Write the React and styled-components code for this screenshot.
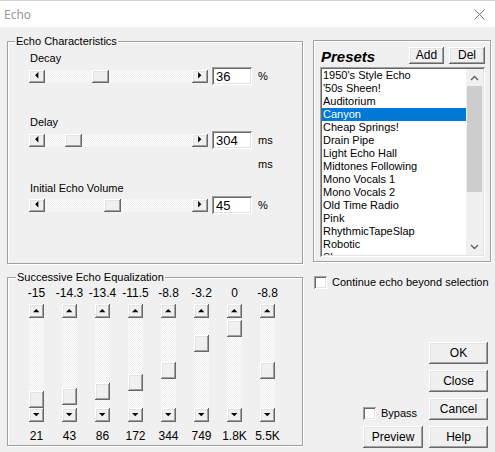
import React from 'react';
import styled, { createGlobalStyle, css } from 'styled-components';

const Global = createGlobalStyle`
  html, body { margin: 0; padding: 0; background: #f0f0f0; }
  body { font-family: "Liberation Sans", Arial, sans-serif; font-size: 11px; color: #000; }
  * { box-sizing: border-box; }
`;

const raised = css`
  background: #f0f0f0;
  box-shadow: inset -1px -1px #696969, inset 1px 1px #fff, inset -2px -2px #a0a0a0, inset 2px 2px #e3e3e3;
`;
const sunken = css`
  background: #fff;
  box-shadow: inset 1px 1px #a0a0a0, inset -1px -1px #fff, inset 2px 2px #696969, inset -2px -2px #e3e3e3;
`;
const dither = css`
  background: repeating-conic-gradient(#fff 0 25%, #ececec 0 50%) 0 0 / 2px 2px;
`;

const Window = styled.div`
  width: 495px;
  height: 452px;
  display: flex;
  flex-direction: column;
  overflow: hidden;
  background: #f0f0f0;
`;

const TitleBar = styled.div`
  height: 27px;
  flex: none;
  background: #fff;
  border-top: 1px solid #d4d4d4;
  display: flex;
  align-items: center;
  justify-content: space-between;
  padding: 0 10px 0 4px;
`;

const Title = styled.span`
  font-family: "Noto Sans", "Open Sans", sans-serif;
  font-size: 12px;
  color: #999;
`;

const Body = styled.div`
  flex: 1;
  display: flex;
  padding-left: 7px;
`;

const LeftCol = styled.div`
  width: 297px;
  display: flex;
  flex-direction: column;
`;

const GroupBox = styled.div`
  position: relative;
  width: 296px;
  height: ${p => p.$h}px;
  margin-top: ${p => p.$mt}px;
  border: 1px solid #a0a0a0;
  box-shadow: inset 1px 1px #fff, 1px 1px #fff;
`;

const Legend = styled.span`
  position: absolute;
  top: -7px;
  left: ${p => p.$left || 7}px;
  padding: 0 1px;
  line-height: 13px;
  background: #f0f0f0;
`;

const CharBody = styled.div`
  display: flex;
  flex-direction: column;
  padding: 10px 0 0 21px;
`;

const FieldLabel = styled.div`
  line-height: 13px;
  height: 13px;
  margin-top: ${p => p.$mt || 0}px;
  padding-left: 1px;
`;

const SliderRow = styled.div`
  display: flex;
  align-items: center;
  height: 18px;
  margin-top: ${p => p.$mt || 0}px;
`;

const HTrackWrap = styled.div`
  display: flex;
  width: 179px;
  height: 13px;
`;

const ArrowBtn = styled.div`
  ${raised};
  flex: none;
  width: ${p => (p.$vertical ? 15 : 16)}px;
  height: ${p => (p.$vertical ? 14 : 13)}px;
  display: flex;
  align-items: center;
  justify-content: center;
  padding: 0 1px 1px 0;
`;

const HTrack = styled.div`
  ${dither};
  flex: 1;
  position: relative;
`;

const HThumb = styled.div`
  ${raised};
  position: absolute;
  top: 0;
  width: 17px;
  height: 13px;
`;

const ValueBox = styled.div`
  ${sunken};
  margin-left: 4px;
  width: 40px;
  height: 18px;
  display: flex;
  align-items: center;
  padding: 1px 0 0 4px;
  font-size: 13px;
`;

const Unit = styled.span`
  margin-left: 6px;
`;

const UnitLine = styled.div`
  line-height: 13px;
  margin-top: 9px;
  padding-left: 229px;
`;

const EqBody = styled.div`
  display: flex;
  padding: 8px 0 0 12px;
`;

const EqCol = styled.div`
  width: 33px;
  display: flex;
  flex-direction: column;
  align-items: center;
`;

const EqValue = styled.div`
  height: 14px;
  line-height: 14px;
  font-size: 12px;
  white-space: nowrap;
  margin-top: ${p => p.$mt || 0}px;
`;

const VSlider = styled.div`
  margin-top: 4px;
  display: flex;
  flex-direction: column;
  width: 15px;
`;

const VTrack = styled.div`
  ${dither};
  position: relative;
  height: 90px;
`;

const VThumb = styled.div`
  ${raised};
  position: absolute;
  left: 0;
  width: 15px;
  height: 17px;
`;

const RightCol = styled.div`
  width: 178px;
  margin-left: 9px;
  display: flex;
  flex-direction: column;
`;

const PresetsBox = styled.div`
  margin-top: 13px;
  height: 222px;
  border: 1px solid #a0a0a0;
  box-shadow: inset 1px 1px #fff, 1px 1px #fff;
  padding: 6px 5px 0 6px;
  display: flex;
  flex-direction: column;
`;

const PresetsHeader = styled.div`
  display: flex;
  align-items: center;
  height: 17px;
  gap: 5px;
`;

const PresetsTitle = styled.span`
  font-size: 15px;
  font-weight: bold;
  font-style: italic;
  margin-left: 1px;
  margin-right: auto;
  padding-top: 1px;
`;

const SmallButton = styled.div`
  ${raised};
  width: ${p => p.$w}px;
  height: 17px;
  display: flex;
  align-items: center;
  justify-content: center;
  font-size: 12px;
  padding-bottom: 1px;
`;

const ListBox = styled.div`
  ${sunken};
  margin-top: 3px;
  height: 190px;
  padding: 2px;
  display: flex;
`;

const ListItems = styled.div`
  flex: 1;
  overflow: hidden;
`;

const ListItem = styled.div`
  height: 13px;
  line-height: 13px;
  padding-left: 1px;
  white-space: nowrap;
  font-size: 11px;
  background: ${p => (p.$selected ? '#0078d7' : 'transparent')};
  color: ${p => (p.$selected ? '#fff' : '#000')};
`;

const ScrollBar = styled.div`
  width: 17px;
  background: #f0f0f0;
  display: flex;
  flex-direction: column;
`;

const ScrollArrow = styled.div`
  height: 17px;
  flex: none;
  display: flex;
  align-items: center;
  justify-content: center;
`;

const ScrollTrack = styled.div`
  flex: 1;
  padding: 0 1px;
`;

const ScrollThumb = styled.div`
  background: #cdcdcd;
  height: 106px;
`;

const CheckRow = styled.label`
  display: flex;
  align-items: center;
  margin-top: ${p => p.$mt || 0}px;
  margin-left: ${p => p.$ml || 0}px;
  line-height: 13px;
  white-space: nowrap;
`;

const CheckBox = styled.span`
  ${sunken};
  width: 13px;
  height: 13px;
  flex: none;
  margin-right: 5px;
`;

const ButtonGrid = styled.div`
  margin: auto 3px 4px auto;
  display: grid;
  grid-template-columns: 60px 59px;
  grid-template-rows: repeat(4, 22px);
  column-gap: 6px;
  row-gap: 6px;
`;

const PushButton = styled.div`
  ${raised};
  grid-column: ${p => p.$col};
  grid-row: ${p => p.$row};
  display: flex;
  align-items: center;
  justify-content: center;
  font-size: 12px;
  padding-bottom: 1px;
`;

const GridCell = styled.div`
  grid-column: ${p => p.$col};
  grid-row: ${p => p.$row};
  align-self: end;
`;

const Tri = ({ dir }) => {
  const pts = {
    left: '3,0 3,6 0,3',
    right: '0,0 0,6 3,3',
    up: '0,3 6,3 3,0',
    down: '0,0 6,0 3,3',
  }[dir];
  const horiz = dir === 'left' || dir === 'right';
  return (
    <svg width={horiz ? 4 : 7} height={horiz ? 7 : 4} viewBox={horiz ? '0 0 3.5 6.5' : '0 0 6.5 3.5'}>
      <polygon points={pts} fill="#000" />
    </svg>
  );
};

const Chevron = ({ up }) => (
  <svg width="9" height="6" viewBox="0 0 9 6">
    <polyline
      points={up ? '1,5 4.5,1.5 8,5' : '1,1 4.5,4.5 8,1'}
      fill="none"
      stroke="#606060"
      strokeWidth="1.4"
    />
  </svg>
);

const CloseIcon = () => (
  <svg width="11" height="11" viewBox="0 0 11 11">
    <path d="M0.5 0.5 L10.5 10.5 M10.5 0.5 L0.5 10.5" stroke="#777" strokeWidth="1" />
  </svg>
);

const HSlider = ({ value, min, max }) => {
  const left = Math.round(((value - min) / (max - min)) * 130);
  return (
    <HTrackWrap>
      <ArrowBtn><Tri dir="left" /></ArrowBtn>
      <HTrack>
        <HThumb style={{ left }} />
      </HTrack>
      <ArrowBtn><Tri dir="right" /></ArrowBtn>
    </HTrackWrap>
  );
};

const eqBands = [
  { v: '-15', f: '21' },
  { v: '-14.3', f: '43' },
  { v: '-13.4', f: '86' },
  { v: '-11.5', f: '172' },
  { v: '-8.8', f: '344' },
  { v: '-3.2', f: '749' },
  { v: '0', f: '1.8K' },
  { v: '-8.8', f: '5.5K' },
];

const presets = [
  "1950's Style Echo",
  "'50s Sheen!",
  'Auditorium',
  'Canyon',
  'Cheap Springs!',
  'Drain Pipe',
  'Light Echo Hall',
  'Midtones Following',
  'Mono Vocals 1',
  'Mono Vocals 2',
  'Old Time Radio',
  'Pink',
  'RhythmicTapeSlap',
  'Robotic',
  'Shower',
];

export default function App() {
  return (
    <>
      <Global />
      <Window>
        <TitleBar>
          <Title>Echo</Title>
          <CloseIcon />
        </TitleBar>
        <Body>
          <LeftCol>
            <GroupBox $mt={14} $h={223}>
              <Legend>Echo Characteristics</Legend>
              <CharBody>
                <FieldLabel>Decay</FieldLabel>
                <SliderRow $mt={2}>
                  <HSlider value={36} min={0} max={100} />
                  <ValueBox>36</ValueBox>
                  <Unit>%</Unit>
                </SliderRow>
                <FieldLabel $mt={31}>Delay</FieldLabel>
                <SliderRow $mt={2}>
                  <HSlider value={304} min={0} max={2000} />
                  <ValueBox>304</ValueBox>
                  <Unit>ms</Unit>
                </SliderRow>
                <UnitLine>ms</UnitLine>
                <FieldLabel $mt={11}>Initial Echo Volume</FieldLabel>
                <SliderRow $mt={1}>
                  <HSlider value={45} min={0} max={100} />
                  <ValueBox>45</ValueBox>
                  <Unit>%</Unit>
                </SliderRow>
              </CharBody>
            </GroupBox>
            <GroupBox $mt={13} $h={169}>
              <Legend $left={8}>Successive Echo Equalization</Legend>
              <EqBody>
                {eqBands.map((b, i) => (
                  <EqCol key={i}>
                    <EqValue>{b.v}</EqValue>
                    <VSlider>
                      <ArrowBtn $vertical><Tri dir="up" /></ArrowBtn>
                      <VTrack>
                        <VThumb style={{ top: Math.round(2 + (-parseFloat(b.v) * 71) / 15) }} />
                      </VTrack>
                      <ArrowBtn $vertical><Tri dir="down" /></ArrowBtn>
                    </VSlider>
                    <EqValue $mt={7}>{b.f}</EqValue>
                  </EqCol>
                ))}
              </EqBody>
            </GroupBox>
          </LeftCol>
          <RightCol>
            <PresetsBox>
              <PresetsHeader>
                <PresetsTitle>Presets</PresetsTitle>
                <SmallButton $w={35}>Add</SmallButton>
                <SmallButton $w={36}>Del</SmallButton>
              </PresetsHeader>
              <ListBox>
                <ListItems>
                  {presets.map(p => (
                    <ListItem key={p} $selected={p === 'Canyon'}>{p}</ListItem>
                  ))}
                </ListItems>
                <ScrollBar>
                  <ScrollArrow><Chevron up /></ScrollArrow>
                  <ScrollTrack><ScrollThumb /></ScrollTrack>
                  <ScrollArrow><Chevron /></ScrollArrow>
                </ScrollBar>
              </ListBox>
            </PresetsBox>
            <CheckRow $mt={14} $ml={1}>
              <CheckBox />
              Continue echo beyond selection
            </CheckRow>
            <ButtonGrid>
              <PushButton $col={2} $row={1}>OK</PushButton>
              <PushButton $col={2} $row={2}>Close</PushButton>
              <GridCell $col={1} $row={3}>
                <CheckRow>
                  <CheckBox />
                  Bypass
                </CheckRow>
              </GridCell>
              <PushButton $col={2} $row={3}>Cancel</PushButton>
              <PushButton $col={1} $row={4}>Preview</PushButton>
              <PushButton $col={2} $row={4}>Help</PushButton>
            </ButtonGrid>
          </RightCol>
        </Body>
      </Window>
    </>
  );
}
